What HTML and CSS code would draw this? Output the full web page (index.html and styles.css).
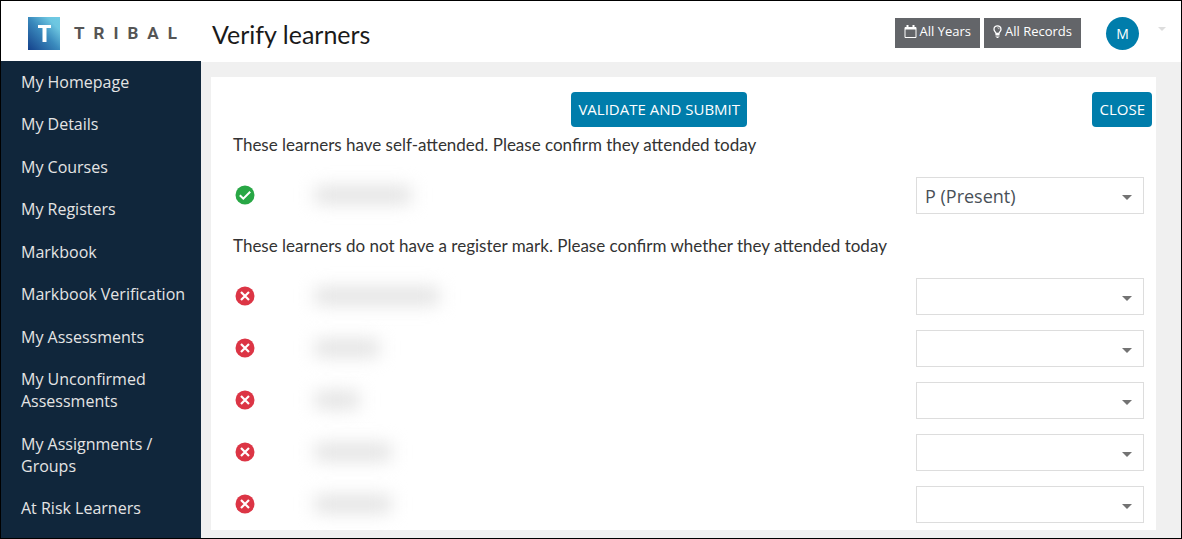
FILE: index.html
```html
<!DOCTYPE html>
<html lang="en">
<head>
    <meta charset="UTF-8">
    <meta name="viewport" content="width=device-width, initial-scale=1.0">
    <title>Verify learners</title>
    <link rel="stylesheet" href="styles.css">
</head>
<body>
    <svg width="0" height="0" class="symbols" aria-hidden="true">
        <symbol id="icon-check" viewBox="0 0 20 20">
            <circle cx="10" cy="10" r="9.5" fill="#28a745"/>
            <path d="M4.8 10.2l3.5 3.5 6.9-7" fill="none" stroke="#fff" stroke-width="2"/>
        </symbol>
        <symbol id="icon-cross" viewBox="0 0 20 20">
            <circle cx="10" cy="10" r="9.5" fill="#dc3545"/>
            <path d="M6 6l8 8M14 6l-8 8" fill="none" stroke="#fff" stroke-width="2.2"/>
        </symbol>
    </svg>

    <header class="header">
        <a href="#" class="brand">
            <svg class="logo" viewBox="0 0 32 33" aria-hidden="true">
                <defs>
                    <linearGradient id="logo-fill" x1="0" y1="1" x2="1" y2="0">
                        <stop offset="0" stop-color="#14418b"/>
                        <stop offset="0.5" stop-color="#3a8abd"/>
                        <stop offset="0.8" stop-color="#6cc5e0"/>
                        <stop offset="1" stop-color="#70cbe4"/>
                    </linearGradient>
                </defs>
                <rect width="32" height="33" fill="url(#logo-fill)"/>
                <rect x="10" y="8" width="13" height="3" fill="#fff"/>
                <rect x="14.500" y="8" width="4" height="17" fill="#fff"/>
            </svg>
            <span class="brand-name">TRIBAL</span>
        </a>
        <h1>Verify learners</h1>
        <div class="filters">
            <button type="button" class="filter">
                <svg width="13" height="13" viewBox="0 0 13 13" fill="none" stroke="#fff" aria-hidden="true">
                    <path d="M1 2.5h11v10H1z"/>
                    <path d="M1 3.5h11" stroke-width="2"/>
                    <path d="M3.5 0v3M9.5 0v3" stroke-width="2"/>
                </svg>
                All Years
            </button>
            <button type="button" class="filter">
                <svg width="9" height="13" viewBox="0 0 9 13" fill="none" stroke="#fff" aria-hidden="true">
                    <path d="M3 8.5C3 7 1 6.500 1 4.300a3.500 3.500 0 0 1 7 0C8 6.500 6 7 6 8.500z" stroke-width="1.300"/>
                    <path d="M4.500 2.700c1 0 1.500.6 1.500 1.500" stroke-width=".8"/>
                    <path d="M2.500 9.500h4M2.500 11h4M3.500 12.500h2"/>
                </svg>
                All Records
            </button>
        </div>
        <button type="button" class="avatar">M</button>
        <span class="user-arrow"></span>
    </header>

    <div class="page">
        <nav class="sidebar">
            <a href="#">My Homepage</a>
            <a href="#">My Details</a>
            <a href="#">My Courses</a>
            <a href="#">My Registers</a>
            <a href="#">Markbook</a>
            <a href="#">Markbook Verification</a>
            <a href="#">My Assessments</a>
            <a href="#">My Unconfirmed Assessments</a>
            <a href="#">My Assignments / Groups</a>
            <a href="#">At Risk Learners</a>
        </nav>

        <main class="content">
            <div class="panel">
                <div class="toolbar">
                    <button type="button" class="btn submit">VALIDATE AND SUBMIT</button>
                    <button type="button" class="btn">CLOSE</button>
                </div>

                <h2>These learners have self-attended. Please confirm they attended today</h2>
                <ul class="learners">
                    <li>
                        <svg class="status" aria-hidden="true"><use href="#icon-check"/></svg>
                        <span class="name medium"></span>
                        <span class="select">
                            <select aria-label="Register mark">
                                <option>P (Present)</option>
                            </select>
                        </span>
                    </li>
                </ul>

                <h2>These learners do not have a register mark. Please confirm whether they attended today</h2>
                <ul class="learners">
                    <li>
                        <svg class="status" aria-hidden="true"><use href="#icon-cross"/></svg>
                        <span class="name long"></span>
                        <span class="select"><select aria-label="Register mark"><option></option></select></span>
                    </li>
                    <li>
                        <svg class="status" aria-hidden="true"><use href="#icon-cross"/></svg>
                        <span class="name short"></span>
                        <span class="select"><select aria-label="Register mark"><option></option></select></span>
                    </li>
                    <li>
                        <svg class="status" aria-hidden="true"><use href="#icon-cross"/></svg>
                        <span class="name tiny"></span>
                        <span class="select"><select aria-label="Register mark"><option></option></select></span>
                    </li>
                    <li>
                        <svg class="status" aria-hidden="true"><use href="#icon-cross"/></svg>
                        <span class="name"></span>
                        <span class="select"><select aria-label="Register mark"><option></option></select></span>
                    </li>
                    <li>
                        <svg class="status" aria-hidden="true"><use href="#icon-cross"/></svg>
                        <span class="name"></span>
                        <span class="select"><select aria-label="Register mark"><option></option></select></span>
                    </li>
                </ul>
            </div>
        </main>
    </div>
</body>
</html>
```
FILE: styles.css
```css
* {
    box-sizing: border-box;
}

body {
    margin: 0;
    min-height: 100vh;
    display: flex;
    flex-direction: column;
    border: 1px solid #000;
    font-family: "Open Sans", sans-serif;
    font-size: 16px;
    background-color: #fff;
}

.symbols {
    position: absolute;
}

button {
    border: none;
    color: #fff;
    font-family: inherit;
    cursor: pointer;
}

/* Header */
.header {
    display: flex;
    align-items: center;
    height: 60px;
    padding: 4px 15px 0 27px;
}

.brand {
    display: flex;
    align-items: center;
    gap: 14px;
    width: 184px;
    text-decoration: none;
}

.logo {
    width: 32px;
    height: 33px;
}

.brand-name {
    font-family: Roboto, sans-serif;
    font-size: 17px;
    font-weight: 700;
    letter-spacing: 9px;
    color: #555;
}

h1 {
    margin: 2px 0 0;
    font-family: Lato, sans-serif;
    font-size: 25px;
    font-weight: 400;
    color: #1a1a1a;
}

.filters {
    display: flex;
    gap: 4px;
    margin-left: auto;
}

.filter {
    display: flex;
    align-items: center;
    gap: 3px;
    height: 30px;
    padding: 0 9px 4px;
    background-color: #636569;
    font-size: 13px;
}

.avatar {
    width: 33px;
    height: 33px;
    margin: 0 19px 0 25px;
    padding: 0;
    border-radius: 50%;
    background-color: #007dab;
    font-size: 14px;
}

.user-arrow {
    border: 4px solid transparent;
    border-top-color: #ddd;
    border-bottom: none;
    margin-bottom: 8px;
}

/* Layout */
.page {
    display: flex;
    flex: 1;
}

.sidebar {
    display: flex;
    flex-direction: column;
    justify-content: space-between;
    flex: 0 0 200px;
    padding: 10px 14px 19px 20px;
    background-color: #10263b;
}

.sidebar a {
    color: #e4e4e4;
    line-height: 22px;
    text-decoration: none;
}

.content {
    flex: 1;
    padding: 15px 25px 8px 10px;
    border-top: 1px solid #fff;
    background-color: #f0f0f0;
}

.panel {
    height: 100%;
    padding-top: 15px;
    background-color: #fff;
}

.toolbar {
    display: flex;
    padding: 0 4px 0 15px;
}

.btn {
    height: 35px;
    padding: 0 7px 2px;
    border-radius: 4px;
    background-color: #007dab;
    font-size: 15px;
}

.submit {
    margin: 0 auto;
}

h2 {
    margin: 0;
    padding: 7px 22px 13px;
    font-family: Lato, sans-serif;
    font-size: 17px;
    font-weight: 400;
    line-height: 22px;
    color: #333;
}

/* Learner rows */
.learners {
    margin: 0 0 7px;
    padding: 0 12px 0 24px;
    list-style: none;
}

.learners:last-child {
    margin-bottom: 0;
}

.learners li {
    display: flex;
    align-items: center;
    height: 52px;
}

.status {
    width: 20px;
    height: 20px;
    margin-right: 60px;
}

.name {
    width: 76px;
    height: 16px;
    background-color: #dfdfdf;
    filter: blur(9px);
}

.name.medium {
    width: 96px;
}

.name.long {
    width: 124px;
}

.name.short {
    width: 64px;
}

.name.tiny {
    width: 44px;
}

.select {
    position: relative;
    margin-left: auto;
}

.select::after {
    content: "";
    position: absolute;
    top: 18px;
    right: 12px;
    border: 5px solid transparent;
    border-top-color: #737373;
    border-bottom: none;
    pointer-events: none;
}

select {
    display: block;
    width: 228px;
    height: 37px;
    padding: 2px 8px 0;
    border: 1px solid #ddd;
    border-radius: 0;
    appearance: none;
    background-color: #fff;
    color: #495057;
    font-family: inherit;
    font-size: 18px;
}
```
